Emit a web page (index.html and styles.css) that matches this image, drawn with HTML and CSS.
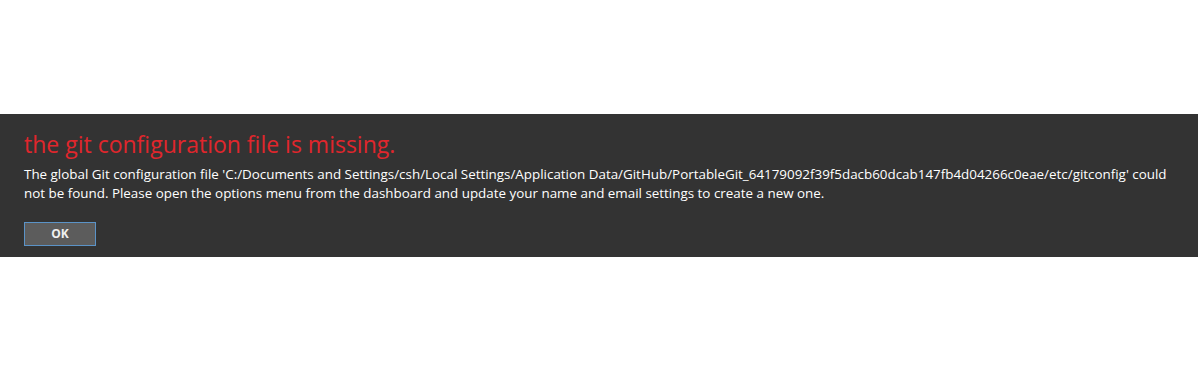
FILE: index.html
```html
<!DOCTYPE html>
<html>
<head>
<meta charset="utf-8">
<link rel="stylesheet" href="styles.css">
</head>
<body>
<div class="page">
  <div class="dialog">
    <h1 class="title">the git configuration file is missing.</h1>
    <p class="message">The global Git configuration file 'C:/Documents and Settings/csh/Local Settings/Application Data/GitHub/PortableGit_64179092f39f5dacb60dcab147fb4d04266c0eae/etc/gitconfig' could not be found. Please open the options menu from the dashboard and update your name and email settings to create a new one.</p>
    <div class="actions">
      <button class="ok">OK</button>
    </div>
  </div>
</div>
</body>
</html>
```
FILE: styles.css
```css
html, body {
  margin: 0;
  padding: 0;
  background: #ffffff;
}
.page {
  padding-top: 114px;
  width: 1203px;
  height: 368px;
  box-sizing: border-box;
}
.dialog {
  width: 1198px;
  height: 143px;
  box-sizing: border-box;
  background: #333333;
  padding: 15px 24px 0 24px;
  font-family: "Open Sans", "Noto Sans", sans-serif;
}
.title {
  margin: 0;
  font-weight: normal;
  font-size: 23px;
  line-height: 30px;
  color: #e0262c;
}
.message {
  margin: 6px 0 0 0;
  font-size: 13.4px;
  line-height: 19px;
  color: #ffffff;
  max-width: 1150px;
}
.actions {
  margin-top: 18px;
}
.ok {
  width: 72px;
  height: 24px;
  padding: 0;
  margin: 0;
  background: #5c5c5c;
  border: 1px solid #5b93c7;
  color: #f0f0f0;
  font-family: "Open Sans", sans-serif;
  font-weight: bold;
  font-size: 12px;
}
```
